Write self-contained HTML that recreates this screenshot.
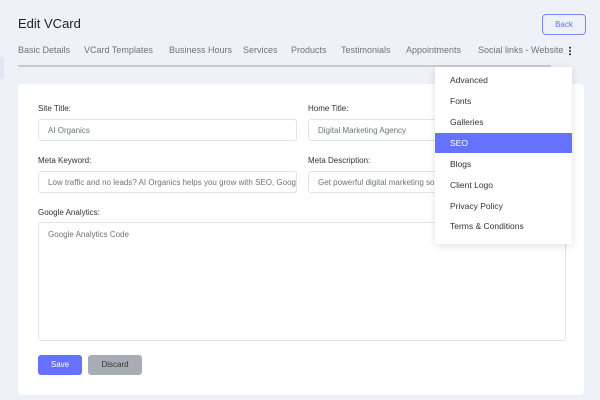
<!DOCTYPE html>
<html><head><style>
*{box-sizing:border-box;margin:0;padding:0}
body{width:600px;height:400px;background:#eef1f7;font-family:"Liberation Sans",sans-serif;position:relative;overflow:hidden;color:#212529}
.a{position:absolute}
.lbl{font-size:8px;color:#333}
.inp{border:1px solid #dfe3ea;border-radius:3px;background:#fff;font-size:8px;color:#6c757d;padding:0 9px;display:flex;align-items:center}
.tab{font-size:9px;color:#6c757d;top:45px;white-space:nowrap}
.dd div{position:absolute;left:0;width:137px;height:20px;font-size:8.5px;color:#333;padding-left:15px;line-height:20px}
</style></head><body>
<div class="a" style="left:0;top:57px;width:4px;height:22px;background:#e3e7f5"></div>
<div class="a" style="left:18px;top:16px;font-size:13px;color:#222;font-weight:500">Edit VCard</div>
<div class="a" style="left:542px;top:14px;width:44px;height:21px;border:1px solid #7a86f5;border-radius:4px;font-size:8px;color:#6571ff;text-align:center;line-height:19px">Back</div>
<div class="a tab" style="left:18px">Basic Details</div>
<div class="a tab" style="left:84px">VCard Templates</div>
<div class="a tab" style="left:169px">Business Hours</div>
<div class="a tab" style="left:243px">Services</div>
<div class="a tab" style="left:291px">Products</div>
<div class="a tab" style="left:341px">Testimonials</div>
<div class="a tab" style="left:406px">Appointments</div>
<div class="a tab" style="left:478px">Social links - Website</div>
<div class="a" style="left:569px;top:46px;width:2px;height:10px;background:radial-gradient(circle,#333 0.9px,transparent 1.1px) 0 0/2px 3.3px"></div>
<div class="a" style="left:18px;top:65px;width:533px;height:2px;background:#c8cbd2"></div>
<div class="a" style="left:18px;top:84px;width:566px;height:311px;background:#fff;border-radius:4px"></div>
<div class="a lbl" style="left:38px;top:104px">Site Title:</div>
<div class="a inp" style="left:38px;top:119px;width:259px;height:22px">AI Organics</div>
<div class="a lbl" style="left:308px;top:104px">Home Title:</div>
<div class="a inp" style="left:308px;top:119px;width:258px;height:22px">Digital Marketing Agency</div>
<div class="a lbl" style="left:38px;top:156px">Meta Keyword:</div>
<div class="a inp" style="left:38px;top:171px;width:259px;height:22px;white-space:nowrap;overflow:hidden">Low traffic and no leads? AI Organics helps you grow with SEO, Goog</div>
<div class="a lbl" style="left:308px;top:156px">Meta Description:</div>
<div class="a inp" style="left:308px;top:171px;width:258px;height:22px;white-space:nowrap;overflow:hidden">Get powerful digital marketing solutions</div>
<div class="a lbl" style="left:38px;top:208px">Google Analytics:</div>
<div class="a inp" style="left:38px;top:222px;width:528px;height:119px;align-items:flex-start;padding-top:7px">Google Analytics Code</div>
<div class="a" style="left:38px;top:355px;width:44px;height:20px;background:#6571ff;border-radius:3px;color:#fff;font-size:8px;text-align:center;line-height:20px">Save</div>
<div class="a" style="left:88px;top:355px;width:54px;height:20px;background:#a8adb5;border-radius:3px;color:#333;font-size:8px;text-align:center;line-height:20px">Discard</div>
<div class="a dd" style="left:435px;top:67px;width:137px;height:177px;background:#fff;box-shadow:0 2px 8px rgba(0,0,0,.12)">
<div style="top:3px">Advanced</div>
<div style="top:24px">Fonts</div>
<div style="top:45px">Galleries</div>
<div style="top:66px;background:#6571ff;color:#fff">SEO</div>
<div style="top:87px">Blogs</div>
<div style="top:108px">Client Logo</div>
<div style="top:129px">Privacy Policy</div>
<div style="top:149px">Terms &amp; Conditions</div>
</div>
</body></html>
